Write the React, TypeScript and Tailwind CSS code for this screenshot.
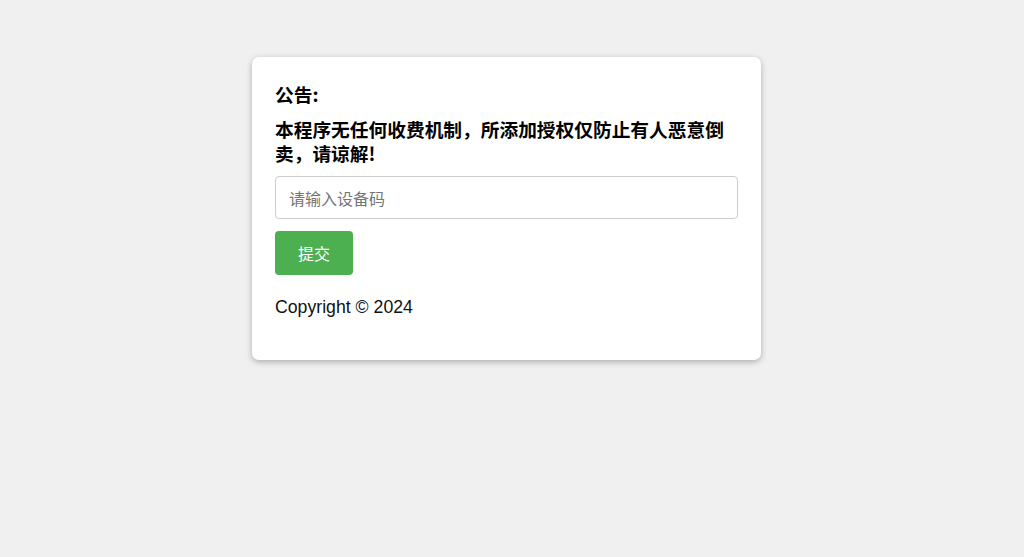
import React from "react";

export default function App() {
  return (
    <div className="min-h-[557px] w-full bg-[#f0f0f0] pt-[57px] pl-[252px] font-['Liberation_Sans',Arial,'Noto_Sans_CJK_SC',sans-serif]">
      <div className="flex w-[509px] flex-col rounded-[7px] bg-white px-[23px] pt-[25px] pb-[43px] shadow-[0_2px_6px_rgba(0,0,0,0.28)]">
        <h3 className="m-0 font-['Noto_Sans_CJK_SC',sans-serif] text-[18.72px] font-bold leading-[24px] text-black">
          公告:
        </h3>
        <h3 className="mt-[11px] font-['Noto_Sans_CJK_SC',sans-serif] text-[18.72px] font-bold leading-[24px] text-black">
          本程序无任何收费机制，所添加授权仅防止有人恶意倒卖，请谅解!
        </h3>
        <input
          type="text"
          placeholder="请输入设备码"
          className="mt-[11px] box-border block h-[43px] w-full rounded-[4px] border border-[#cccccc] bg-white px-[13px] font-['Noto_Sans_CJK_SC',sans-serif] text-[16px] text-black outline-none placeholder:text-[#757575]"
        />
        <button
          type="button"
          className="mt-[12px] flex h-[44px] w-[78px] items-center justify-center rounded-[4px] bg-[#4caf50] font-['Noto_Sans_CJK_SC',sans-serif] text-[16px] text-white"
        >
          提交
        </button>
        <p className="mt-[22px] text-[17.7px] leading-[20px] text-[#111]">Copyright © 2024</p>
      </div>
    </div>
  );
}
